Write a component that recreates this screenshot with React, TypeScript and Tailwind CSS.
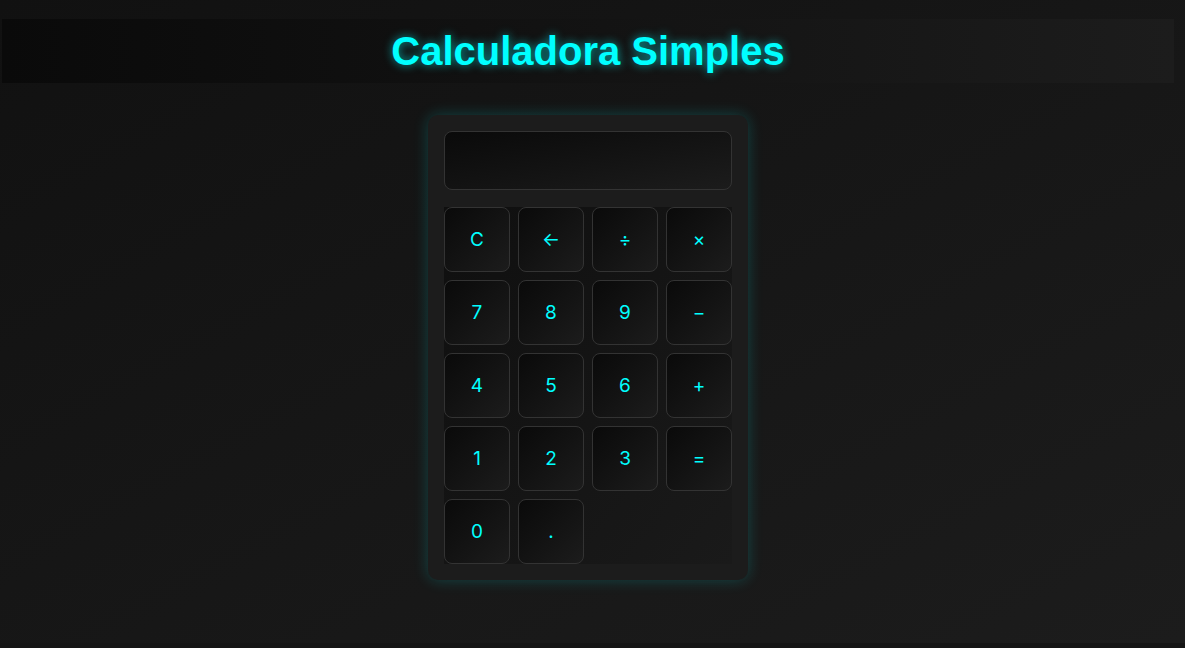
import React, { useState } from "react";

const keys = ["C", "←", "÷", "×", "7", "8", "9", "−", "4", "5", "6", "+", "1", "2", "3", "=", "0", "."];

export default function App() {
  const [display, setDisplay] = useState("");

  const press = (k: string) => {
    if (k === "C") return setDisplay("");
    if (k === "←") return setDisplay((d) => d.slice(0, -1));
    if (k === "=") {
      try {
        const expr = display.replace(/×/g, "*").replace(/÷/g, "/").replace(/−/g, "-");
        // eslint-disable-next-line no-new-func
        setDisplay(String(Function(`return (${expr})`)()));
      } catch {
        setDisplay("Erro");
      }
      return;
    }
    setDisplay((d) => d + k);
  };

  return (
    <div className="bg-[#151515] min-h-[648px]">
      <div
        className="h-[643px] bg-gradient-to-br from-[#111111] to-[#1c1c1c] pt-[19px]"
        style={{ fontFamily: "Inter, 'Noto Sans', sans-serif" }}
      >
        <div className="w-[1176px] flex flex-col items-center">
          {/* Header */}
          <header className="w-[1172px] h-16 flex items-center justify-center bg-gradient-to-r from-[#0a0a0a] to-[#1c1c1c]">
            <h1
              className="text-[40px] font-bold text-[#00ffff] [text-shadow:0_0_10px_rgba(0,255,255,0.6)]"
              style={{ fontFamily: "'Liberation Sans', Arial, sans-serif" }}
            >
              Calculadora Simples
            </h1>
          </header>

          {/* Calculator */}
          <div className="mt-8 w-[320px] bg-[#1c1c1c] rounded-[10px] p-4 shadow-[0_0_15px_rgba(0,255,255,0.2)]">
            <div className="h-[59px] rounded-lg border border-[#333] bg-gradient-to-br from-[#0a0a0a] to-[#1c1c1c] px-3 flex items-center justify-end text-[#00ffff] text-2xl">
              {display}
            </div>

            <div className="mt-[17px] grid grid-cols-4 gap-x-2 gap-y-[8px] bg-gradient-to-br from-[#0f0f0f] to-[#1a1a1a]">
              {keys.map((k) => (
                <button
                  key={k}
                  onClick={() => press(k)}
                  className="h-[65px] pt-[2px] rounded-lg border border-[#333] bg-gradient-to-br from-[#0a0a0a] to-[#1c1c1c] text-[#00ffff] text-[19px] flex items-center justify-center"
                >
                  {k}
                </button>
              ))}
            </div>
          </div>
        </div>
      </div>
    </div>
  );
}
